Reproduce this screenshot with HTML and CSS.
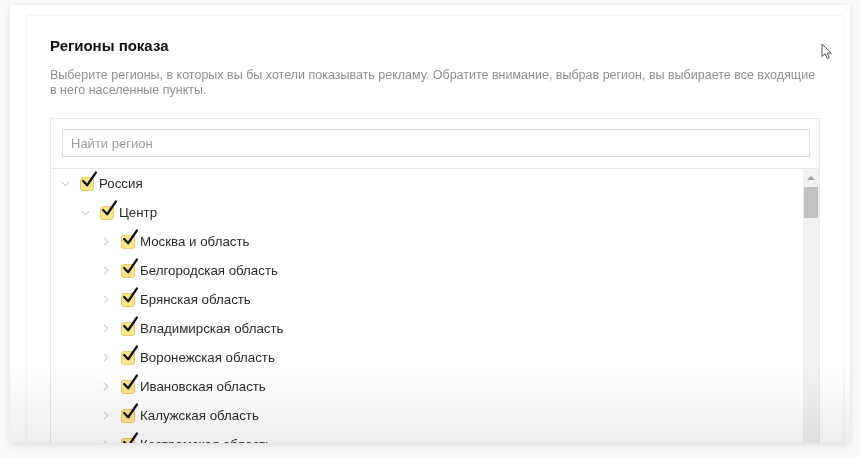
FILE: index.html
```html
<!DOCTYPE html>
<html lang="ru">
<head>
<meta charset="utf-8">
<title>Регионы показа</title>
<link rel="stylesheet" href="styles.css">
</head>
<body>
<div class="frame">
  <div class="card">
    <h2 class="title">Регионы показа</h2>
    <p class="desc">Выберите регионы, в которых вы бы хотели показывать рекламу. Обратите внимание, выбрав регион, вы выбираете все входящие<br>в него населенные пункты.</p>
    <div class="tree-box">
      <div class="search">
        <input class="search-input" type="text" placeholder="Найти регион">
      </div>
      <div class="tree-area">
        <ul class="tree">
          <li class="row lvl0"><span class="chev"><svg width="9" height="6" viewBox="0 0 9 6"><path d="M0.5 0.8 L4.5 4.8 L8.5 0.8" fill="none" stroke="#b5b5b5" stroke-width="1"/></svg></span><span class="cb"><svg class="tick" width="19" height="19" viewBox="0 0 18 18"><path d="M3 9.5 L6.8 13.5 L15 1.5" fill="none" stroke="#111" stroke-width="2.2" stroke-linecap="round" stroke-linejoin="round"/></svg></span><span class="label">Россия</span></li>
          <li class="row lvl1"><span class="chev"><svg width="9" height="6" viewBox="0 0 9 6"><path d="M0.5 0.8 L4.5 4.8 L8.5 0.8" fill="none" stroke="#b5b5b5" stroke-width="1"/></svg></span><span class="cb"><svg class="tick" width="19" height="19" viewBox="0 0 18 18"><path d="M3 9.5 L6.8 13.5 L15 1.5" fill="none" stroke="#111" stroke-width="2.2" stroke-linecap="round" stroke-linejoin="round"/></svg></span><span class="label">Центр</span></li>
          <li class="row lvl2"><span class="chev"><svg width="6" height="9" viewBox="0 0 6 9"><path d="M0.8 0.5 L4.8 4.5 L0.8 8.5" fill="none" stroke="#b5b5b5" stroke-width="1"/></svg></span><span class="cb"><svg class="tick" width="19" height="19" viewBox="0 0 18 18"><path d="M3 9.5 L6.8 13.5 L15 1.5" fill="none" stroke="#111" stroke-width="2.2" stroke-linecap="round" stroke-linejoin="round"/></svg></span><span class="label">Москва и область</span></li>
          <li class="row lvl2"><span class="chev"><svg width="6" height="9" viewBox="0 0 6 9"><path d="M0.8 0.5 L4.8 4.5 L0.8 8.5" fill="none" stroke="#b5b5b5" stroke-width="1"/></svg></span><span class="cb"><svg class="tick" width="19" height="19" viewBox="0 0 18 18"><path d="M3 9.5 L6.8 13.5 L15 1.5" fill="none" stroke="#111" stroke-width="2.2" stroke-linecap="round" stroke-linejoin="round"/></svg></span><span class="label">Белгородская область</span></li>
          <li class="row lvl2"><span class="chev"><svg width="6" height="9" viewBox="0 0 6 9"><path d="M0.8 0.5 L4.8 4.5 L0.8 8.5" fill="none" stroke="#b5b5b5" stroke-width="1"/></svg></span><span class="cb"><svg class="tick" width="19" height="19" viewBox="0 0 18 18"><path d="M3 9.5 L6.8 13.5 L15 1.5" fill="none" stroke="#111" stroke-width="2.2" stroke-linecap="round" stroke-linejoin="round"/></svg></span><span class="label">Брянская область</span></li>
          <li class="row lvl2"><span class="chev"><svg width="6" height="9" viewBox="0 0 6 9"><path d="M0.8 0.5 L4.8 4.5 L0.8 8.5" fill="none" stroke="#b5b5b5" stroke-width="1"/></svg></span><span class="cb"><svg class="tick" width="19" height="19" viewBox="0 0 18 18"><path d="M3 9.5 L6.8 13.5 L15 1.5" fill="none" stroke="#111" stroke-width="2.2" stroke-linecap="round" stroke-linejoin="round"/></svg></span><span class="label">Владимирская область</span></li>
          <li class="row lvl2"><span class="chev"><svg width="6" height="9" viewBox="0 0 6 9"><path d="M0.8 0.5 L4.8 4.5 L0.8 8.5" fill="none" stroke="#b5b5b5" stroke-width="1"/></svg></span><span class="cb"><svg class="tick" width="19" height="19" viewBox="0 0 18 18"><path d="M3 9.5 L6.8 13.5 L15 1.5" fill="none" stroke="#111" stroke-width="2.2" stroke-linecap="round" stroke-linejoin="round"/></svg></span><span class="label">Воронежская область</span></li>
          <li class="row lvl2"><span class="chev"><svg width="6" height="9" viewBox="0 0 6 9"><path d="M0.8 0.5 L4.8 4.5 L0.8 8.5" fill="none" stroke="#b5b5b5" stroke-width="1"/></svg></span><span class="cb"><svg class="tick" width="19" height="19" viewBox="0 0 18 18"><path d="M3 9.5 L6.8 13.5 L15 1.5" fill="none" stroke="#111" stroke-width="2.2" stroke-linecap="round" stroke-linejoin="round"/></svg></span><span class="label">Ивановская область</span></li>
          <li class="row lvl2"><span class="chev"><svg width="6" height="9" viewBox="0 0 6 9"><path d="M0.8 0.5 L4.8 4.5 L0.8 8.5" fill="none" stroke="#b5b5b5" stroke-width="1"/></svg></span><span class="cb"><svg class="tick" width="19" height="19" viewBox="0 0 18 18"><path d="M3 9.5 L6.8 13.5 L15 1.5" fill="none" stroke="#111" stroke-width="2.2" stroke-linecap="round" stroke-linejoin="round"/></svg></span><span class="label">Калужская область</span></li>
          <li class="row lvl2"><span class="chev"><svg width="6" height="9" viewBox="0 0 6 9"><path d="M0.8 0.5 L4.8 4.5 L0.8 8.5" fill="none" stroke="#b5b5b5" stroke-width="1"/></svg></span><span class="cb"><svg class="tick" width="19" height="19" viewBox="0 0 18 18"><path d="M3 9.5 L6.8 13.5 L15 1.5" fill="none" stroke="#111" stroke-width="2.2" stroke-linecap="round" stroke-linejoin="round"/></svg></span><span class="label">Костромская область</span></li>
        </ul>
        <div class="scrollbar">
          <span class="sb-arrow"></span>
          <span class="sb-thumb"></span>
        </div>
      </div>
    </div>
  </div>
  <svg class="cursor" width="12" height="17" viewBox="0 0 12 17"><path d="M1 1 L1 13.5 L4 10.8 L6.3 15.6 L8.3 14.7 L6.1 10 L10.2 10 Z" fill="#fff" stroke="#555" stroke-width="1" stroke-linejoin="round"/></svg>
</div>
</body>
</html>
```

FILE: styles.css
```css
* { box-sizing: border-box; }
html, body { margin: 0; padding: 0; }
body {
  background: #fafafa;
  font-family: "Liberation Sans", Arial, sans-serif;
  width: 860px;
  height: 457px;
  overflow: hidden;
}
.frame {
  position: relative;
  margin: 5px 10px 0;
  height: 438px;
  background: #fff;
  box-shadow: 0 3px 8px rgba(0,0,0,0.10), 0 0 1px rgba(0,0,0,0.10);
  padding: 11px 7px 0 17px;
  display: flex;
  overflow: hidden;
}
.frame::after {
  content: "";
  position: absolute;
  left: 0; right: 0; bottom: 0;
  height: 75px;
  background: linear-gradient(#ffffff, #ededed);
  mix-blend-mode: multiply;
  pointer-events: none;
}
.card {
  flex: 1;
  background: #fff;
  box-shadow: 0 0 3px rgba(0,0,0,0.10);
  padding: 21px 23px 0 23px;
  display: flex;
  flex-direction: column;
  overflow: hidden;
}
.title {
  margin: 0;
  font-size: 15px;
  line-height: 18px;
  font-weight: bold;
  color: #111;
}
.desc {
  margin: 13px 0 0;
  font-size: 12.5px;
  line-height: 15px;
  color: #8f8f8f;
  margin-right: -6px;
}
.tree-box {
  margin-top: 20px;
  border: 1px solid #e8e8e8;
  border-bottom: none;
  flex: 1;
  display: flex;
  flex-direction: column;
  min-height: 0;
}
.search {
  padding: 10px 9px 11px 11px;
  border-bottom: 1px solid #e6e6e6;
}
.search-input {
  display: block;
  width: 100%;
  height: 28px;
  border: 1px solid #dcdcdc;
  padding: 0 8px;
  font-family: "Liberation Sans", Arial, sans-serif;
  font-size: 13px;
  color: #333;
  outline: none;
  background: #fff;
}
.search-input::placeholder { color: #9a9a9a; }
.tree-area {
  flex: 1;
  display: flex;
  min-height: 0;
}
.tree {
  list-style: none;
  margin: 0;
  padding: 0;
  flex: 1;
}
.row {
  height: 29px;
  display: flex;
  align-items: center;
  font-size: 13.3px;
  color: #2b2b2b;
}
.lvl0 { padding-left: 7px; }
.lvl1 { padding-left: 27px; }
.lvl2 { padding-left: 48px; }
.chev {
  width: 14px;
  height: 14px;
  display: flex;
  align-items: center;
  justify-content: center;
  margin-right: 8px;
}
.cb {
  position: relative;
  width: 14px;
  height: 14px;
  border-radius: 3px;
  background: #fde48e;
  border: 1px solid #e6c968;
  margin-right: 5px;
  flex: none;
}
.tick {
  position: absolute;
  left: -1px;
  top: -7px;
}
.label { white-space: nowrap; }
.scrollbar {
  width: 16px;
  background: #f1f1f1;
  display: flex;
  flex-direction: column;
  align-items: center;
  padding-top: 7px;
}
.sb-arrow {
  width: 0; height: 0;
  border-left: 4px solid transparent;
  border-right: 4px solid transparent;
  border-bottom: 4px solid #a3a3a3;
}
.sb-thumb {
  margin-top: 7px;
  width: 14px;
  height: 31px;
  background: #c1c1c1;
}
.cursor {
  position: absolute;
  left: 811px;
  top: 38px;
}
```
